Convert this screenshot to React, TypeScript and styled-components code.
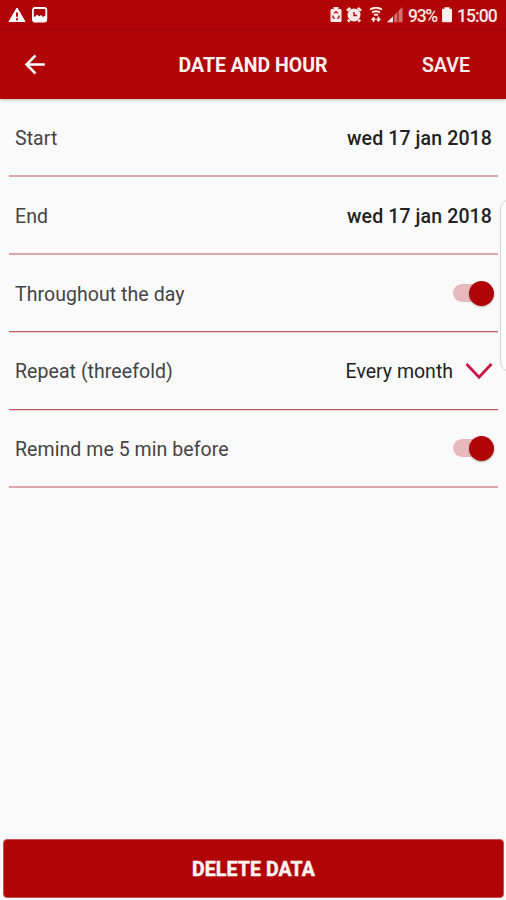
import React from "react";
import styled, { createGlobalStyle } from "styled-components";

const Global = createGlobalStyle`
  * { box-sizing: border-box; }
  body { margin: 0; background: #fafafa; font-family: Roboto, sans-serif; overflow: hidden; }
`;

const Screen = styled.div`
  position: relative;
  width: 506px;
  height: 900px;
  display: flex;
  flex-direction: column;
  background: #fafafa;
  overflow: hidden;
`;

const StatusBar = styled.div`
  height: 30px;
  flex: none;
  display: flex;
  align-items: center;
  justify-content: space-between;
  padding: 1px 9px 0 8px;
  background: #b00407;
  border-bottom: 1px solid #980306;
  color: #fde9e8;
`;

const StatusGroup = styled.div`
  display: flex;
  align-items: center;
  height: 32px;
`;

const Glyph = styled.svg<{ $gap?: number }>`
  display: block;
  flex: none;
  margin-right: ${(p) => p.$gap ?? 0}px;
`;

const StatusText = styled.span<{ $width: number; $gap?: number; $track?: number }>`
  width: ${(p) => p.$width}px;
  margin-right: ${(p) => p.$gap ?? 0}px;
  padding-top: 1px;
  font-size: 17.5px;
  font-weight: 500;
  line-height: 20px;
  letter-spacing: ${(p) => p.$track ?? 0}px;
  white-space: nowrap;
`;

const Toolbar = styled.header`
  height: 69px;
  flex: none;
  display: grid;
  grid-template-columns: 150px 1fr 150px;
  align-items: center;
  padding-bottom: 1px;
  background: #b00407;
  color: #fff3f2;
  box-shadow: 0 1px 3px rgba(90, 90, 70, 0.4);
`;

const BackButton = styled.button`
  display: flex;
  width: 70px;
  height: 60px;
  padding: 0;
  align-items: center;
  justify-content: center;
  border: 0;
  background: none;
  color: #fff;
`;

const Title = styled.h1`
  margin: 4px 0 0;
  text-align: center;
  font-size: 19.5px;
  font-weight: 700;
  line-height: 24px;
  letter-spacing: -0.03px;
  white-space: nowrap;
`;

const SaveButton = styled.button`
  justify-self: end;
  margin: 3px 36px 0 0;
  padding: 0;
  border: 0;
  background: none;
  color: #ffeceb;
  font: 500 19.5px/24px Roboto, sans-serif;
  letter-spacing: 0.1px;
  -webkit-text-stroke: 0.2px;
`;

const List = styled.main`
  flex: 1;
  padding: 0 8px 0 9px;
`;

const Row = styled.div<{ $height: number; $sharp?: boolean }>`
  height: ${(p) => p.$height}px;
  display: flex;
  align-items: center;
  justify-content: space-between;
  padding: 0 5px 0 6px;
  border-bottom: ${(p) => (p.$sharp ? "1px solid #bd5d61" : "2px solid #dba7a9")};
  box-shadow: ${(p) => (p.$sharp ? "0 1px 0 #ecd0d1" : "none")};
`;

const Label = styled.span`
  padding-top: 3px;
  font-size: 19.5px;
  line-height: 24px;
  color: #444;
  letter-spacing: 0.06px;
  white-space: nowrap;
`;

const DateValue = styled.span`
  padding: 3px 1px 0 0;
  font-size: 19.5px;
  font-weight: 500;
  line-height: 24px;
  letter-spacing: 0.12px;
  color: #222;
  white-space: nowrap;
`;

const Select = styled.div`
  display: flex;
  align-items: center;
  gap: 12px;
`;

const SelectValue = styled.span`
  padding-top: 3px;
  font-size: 19.5px;
  line-height: 24px;
  color: #222;
`;

const Track = styled.div`
  width: 41px;
  height: 18px;
  display: flex;
  align-items: center;
  justify-content: flex-end;
  border-radius: 9px;
  margin-right: -1px;
  background: #e7b9bc;
`;

const Thumb = styled.div`
  width: 25px;
  height: 25px;
  flex: none;
  border-radius: 50%;
  background: #b00407;
  box-shadow: 0 1px 2px rgba(0, 0, 0, 0.3);
`;

const DeleteButton = styled.button`
  height: 59px;
  flex: none;
  margin: 0 2px 2px 3px;
  padding: 3px 0 0;
  border: 1px solid #c65355;
  border-radius: 4px;
  background: #b00407;
  color: #fff3f2;
  font: 700 19.5px/24px Roboto, sans-serif;
  letter-spacing: 0.1px;
  -webkit-text-stroke: 0.5px;
`;

const EdgeHandle = styled.div`
  position: absolute;
  left: 500px;
  top: 199px;
  width: 24px;
  height: 173px;
  border: 1px solid #d2d5d5;
  border-radius: 10px;
  background: #fcfcfc;
`;

const Switch = () => (
  <Track role="switch" aria-checked="true">
    <Thumb />
  </Track>
);

export default function App() {
  return (
    <>
      <Global />
      <Screen>
        <StatusBar>
          <StatusGroup>
            <Glyph width="18" height="16" viewBox="0 0 18 16" $gap={5}>
              <path d="M9 1 17 14.5H1Z" fill="#fff" stroke="#fff" strokeLinejoin="round" />
              <path d="M9 5.5v4.2M9 11.2v2" stroke="#b00407" strokeWidth="2" />
            </Glyph>
            <Glyph width="17" height="16" viewBox="0 0 17 16">
              <rect x="1.9" y="1" width="13.4" height="13.6" rx="2" fill="none" stroke="#fff" strokeWidth="1.8" />
              <path d="M2 8.5 4 10l2-2.5 2 2 2-1.5 2 2 3-2v6.5H2Z" fill="#fff" />
            </Glyph>
          </StatusGroup>
          <StatusGroup>
            <Glyph width="12" height="16" viewBox="0 0 12 16" $gap={4}>
              <path d="M3.5 0h5v2h2q1 0 1 1v11q0 1-1 1h-9q-1 0-1-1V3q0-1 1-1h2Z" fill="#fde9e8" />
              <path d="M4 6.2 6 4.700l2 1.500M3 8.500v2l1.800 1M9 8.500v2l-1.800 1" fill="none" stroke="#b00407" strokeWidth="1.3" />
            </Glyph>
            <Glyph width="16" height="16" viewBox="0 0 16 16" $gap={7}>
              <circle cx="8" cy="8" r="6.500" fill="#fde9e8" />
              <path d="M1 3.8 4.3 1M15 3.8 11.7 1M3.5 12.8 2 14.7M12.5 12.8 14 14.7" stroke="#fde9e8" strokeWidth="2.8" />
              <path d="M8 5v3.500h3" fill="none" stroke="#b00407" strokeWidth="1.4" />
            </Glyph>
            <Glyph width="14" height="16" viewBox="0 0 14 16" $gap={4}>
              <path d="M1 2.500q6-3.500 12 0M3 5.500q4-2.500 8 0M5 8.300q2-1.500 4 0" fill="none" stroke="#fde9e8" strokeWidth="2" />
              <path d="m2.5 12.5 2-2.5 2 2.5ZM7.5 12l2 2.8 2-2.8ZM4 12h1v2.7H4ZM9 10h1v2.5H9Z" fill="#fde9e8" stroke="#fde9e8" strokeWidth=".8" />
            </Glyph>
            <Glyph width="16" height="16" viewBox="0 0 16 16" $gap={5}>
              <path d="M0 15.2 15.5 0v15.2Z" fill="#d46f70" />
              <path d="M0 15.2 6 9.5v5.7Z" fill="#fff0ef" />
              <path d="M6.6 8v8M11 4v12" stroke="#b00407" strokeWidth="1.1" />
            </Glyph>
            <StatusText $width={31} $gap={3} $track={-1.3}>93%</StatusText>
            <Glyph width="10" height="16" viewBox="0 0 10 16" $gap={5}>
              <path d="M2.5.3h5v1.5H9q1 0 1 1v11.500q0 .9-1 .9H1q-1 0-1-.9V2.8q0-1 1-1h1.500Z" fill="#fff0ef" />
            </Glyph>
            <StatusText $width={40} $track={-0.9}>15:00</StatusText>
          </StatusGroup>
        </StatusBar>
        <Toolbar>
          <BackButton aria-label="Back">
            <svg width="22" height="22" viewBox="0 0 22 22" fill="none" stroke="currentColor" strokeWidth="2.5">
              <path d="M20.800 11.500H3M11.500 2.500 2.500 11.500l9 9" />
            </svg>
          </BackButton>
          <Title>DATE AND HOUR</Title>
          <SaveButton>SAVE</SaveButton>
        </Toolbar>
        <List>
          <Row $height={78}>
            <Label>Start</Label>
            <DateValue>wed 17 jan 2018</DateValue>
          </Row>
          <Row $height={78}>
            <Label>End</Label>
            <DateValue>wed 17 jan 2018</DateValue>
          </Row>
          <Row $height={77} $sharp>
            <Label>Throughout the day</Label>
            <Switch />
          </Row>
          <Row $height={78} $sharp>
            <Label>Repeat (threefold)</Label>
            <Select>
              <SelectValue>Every month</SelectValue>
              <svg width="28" height="18" viewBox="0 0 28 18" fill="none" stroke="#cb1746" strokeWidth="2.800">
                <path d="M1.500 2 14 15.200 26.500 2" />
              </svg>
            </Select>
          </Row>
          <Row $height={78}>
            <Label>Remind me 5 min before</Label>
            <Switch />
          </Row>
        </List>
        <DeleteButton>DELETE DATA</DeleteButton>
        <EdgeHandle />
      </Screen>
    </>
  );
}
